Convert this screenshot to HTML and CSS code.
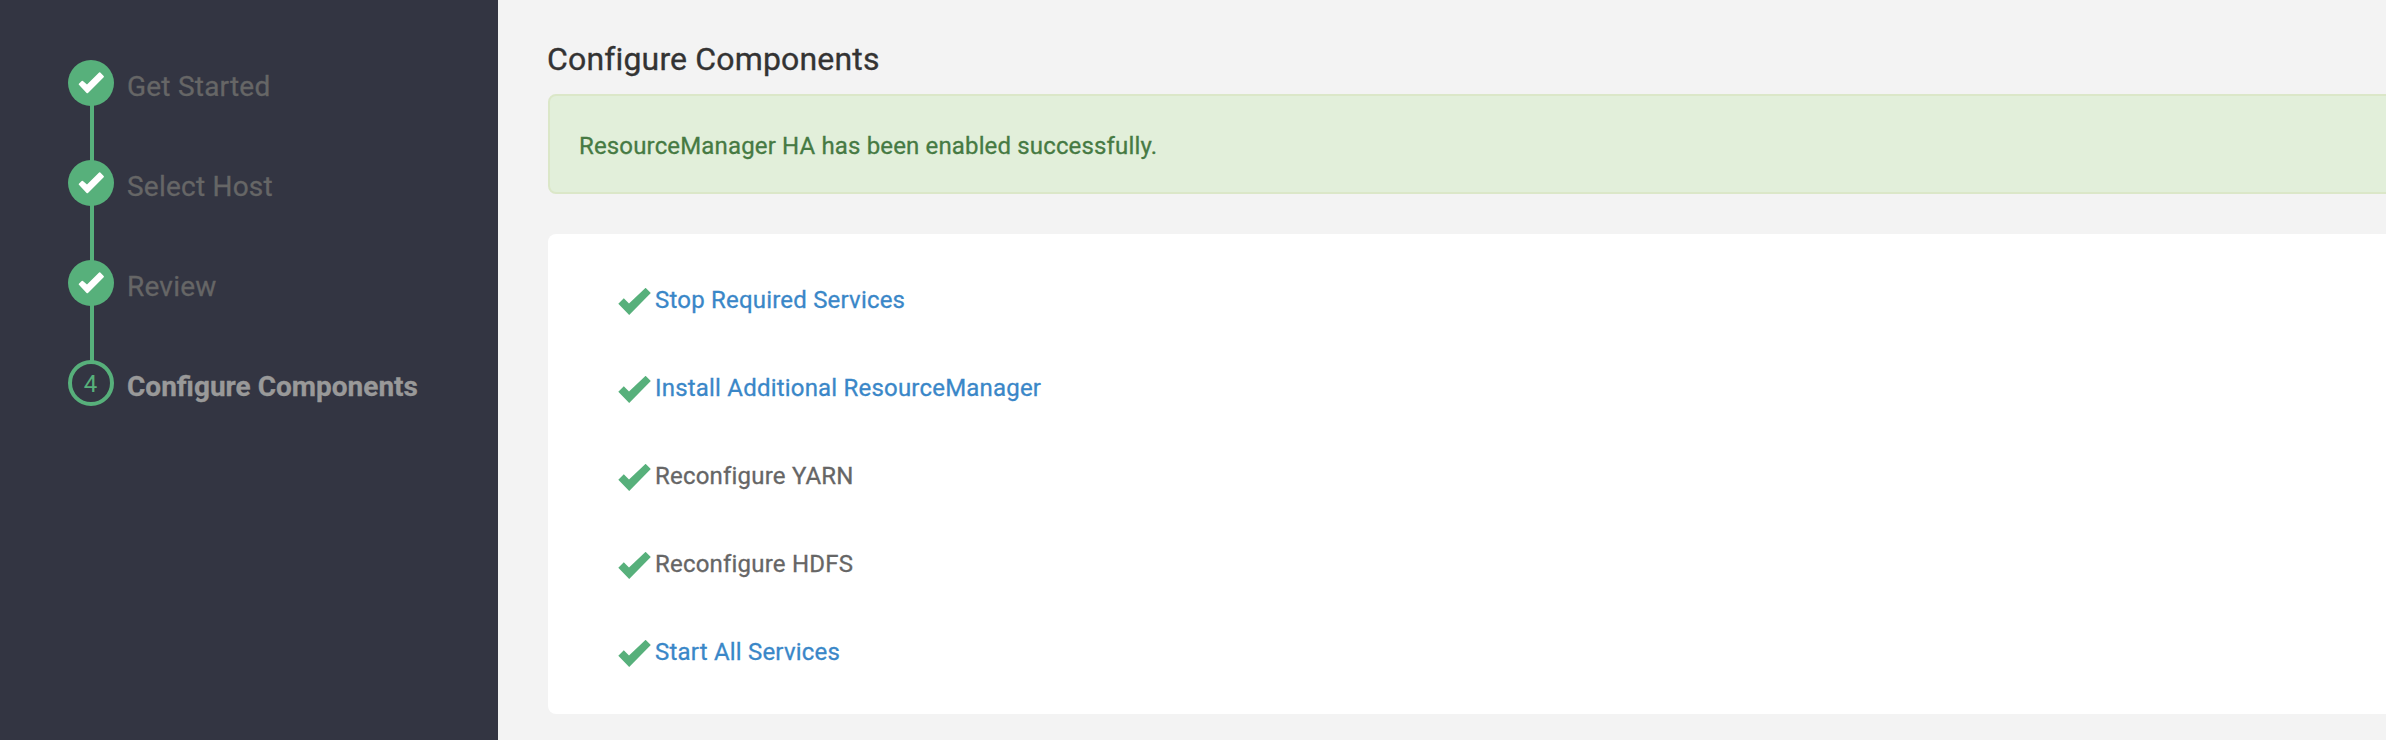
FILE: index.html
```html
<!DOCTYPE html>
<html lang="en">
<head>
<meta charset="utf-8">
<title>Enable ResourceManager HA</title>
<link rel="stylesheet" href="styles.css">
</head>
<body>
<svg class="defs" width="0" height="0">
  <symbol id="tick" viewBox="0 0 33 28"><path d="M.3 15.7 5.8 10.2 11 15.5 27.6 -.2 32.8 5 11.2 27.1Z"/></symbol>
  <symbol id="tick-round" viewBox="0 0 46 46"><path d="M10.9 24.8Q10.4 24.3 10.9 23.7L13.7 20.9Q14.3 20.4 14.9 20.9L19 24.6 31.1 12.6Q31.7 12.1 32.3 12.6L35.7 16Q36.2 16.6 35.7 17.2L20 32.9Q19.3 33.5 18.6 32.9Z"/></symbol>
</svg>
<div class="wizard">
  <nav class="sidebar">
    <ol class="steps">
      <li class="step"><span class="badge done"><svg><use href="#tick-round"/></svg></span><span class="label">Get Started</span></li>
      <li class="step"><span class="badge done"><svg><use href="#tick-round"/></svg></span><span class="label">Select Host</span></li>
      <li class="step"><span class="badge done"><svg><use href="#tick-round"/></svg></span><span class="label">Review</span></li>
      <li class="step active"><span class="badge">4</span><span class="label">Configure Components</span></li>
    </ol>
  </nav>
  <main class="content">
    <h1 class="title">Configure Components</h1>
    <div class="alert"><span>ResourceManager HA has been enabled successfully.</span></div>
    <ul class="tasks">
      <li class="task"><svg class="tick"><use href="#tick"/></svg><a class="link">Stop Required Services</a></li>
      <li class="task"><svg class="tick"><use href="#tick"/></svg><a class="link">Install Additional ResourceManager</a></li>
      <li class="task"><svg class="tick"><use href="#tick"/></svg><span>Reconfigure YARN</span></li>
      <li class="task"><svg class="tick"><use href="#tick"/></svg><span>Reconfigure HDFS</span></li>
      <li class="task"><svg class="tick"><use href="#tick"/></svg><a class="link">Start All Services</a></li>
    </ul>
  </main>
</div>
</body>
</html>
```
FILE: styles.css
```css
* { box-sizing: border-box; }
body { margin: 0; font-family: Roboto, sans-serif; font-size: 24px; background: #f3f3f3; color: #666; }
ol, ul { list-style: none; margin: 0; padding: 0; }
.defs { display: block; height: 0; }
.wizard { display: flex; height: 740px; overflow: hidden; }
.sidebar { flex: 0 0 498px; background: #333542; padding: 60px 0 0 68px; }
.step { position: relative; display: flex; gap: 13px; height: 100px; color: #666; font-size: 28px; }
.step:not(:last-child)::after { content: ""; position: absolute; left: 22px; top: 45px; width: 4px; height: 56px; background: #57b07b; }
.badge { flex: none; width: 46px; height: 46px; border: 4px solid #57b07b; border-radius: 50%; color: #57b07b; font-size: 24px; line-height: 40px; padding-right: 1px; text-align: center; }
.done { background: #57b07b; border: 0; padding: 0; }
.done svg { display: block; width: 46px; height: 46px; fill: #fff; }
.label { line-height: 32px; padding-top: 11px; white-space: nowrap; letter-spacing: .22px; -webkit-text-stroke: .3px currentColor; }
.active .label { color: #999; font-weight: 700; letter-spacing: 0; }
.content { flex: 1; min-width: 0; padding-left: 50px; }
.title { margin: 0 0 0 -1px; height: 94px; padding-top: 40px; font-size: 32px; line-height: 38px; font-weight: 400; color: #333; letter-spacing: .16px; -webkit-text-stroke: .35px currentColor; }
.alert { height: 100px; margin-right: -20px; padding: 34px 29px; border: 2px solid #dbe7c8; border-radius: 8px; background: #e2efda; color: #467a43; line-height: 32px; letter-spacing: .15px; -webkit-text-stroke: .3px currentColor; }
.tasks { height: 480px; margin: 40px -20px 0 0; padding: 49px 70px; border-radius: 8px; background: #fff; }
.task { display: flex; gap: 4px; height: 88px; line-height: 34px; white-space: nowrap; letter-spacing: .2px; -webkit-text-stroke: .3px currentColor; }
.tick { flex: none; width: 33px; height: 28px; margin-top: 5px; fill: #57b07b; stroke: none; overflow: visible; }
.link { color: #3a87c8; }
```
